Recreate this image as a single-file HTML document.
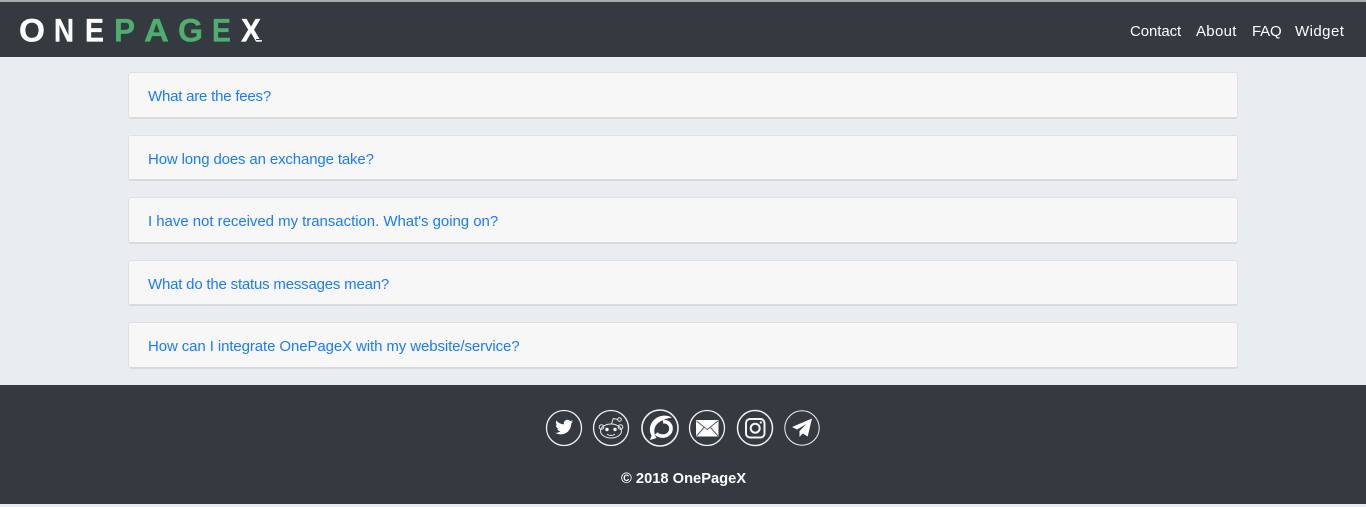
<!DOCTYPE html>
<html><head><meta charset="utf-8"><style>
html,body{margin:0;padding:0;width:1366px;height:507px;overflow:hidden;background:#e9ecf1;font-family:"Liberation Sans",sans-serif}
.h{position:absolute;left:0;top:2px;width:1366px;height:55px;background:#343a40}
.t{position:absolute;left:0;top:0;width:1366px;height:2px;background:#a9aaaa}
.f{position:absolute;left:0;top:385px;width:1366px;height:119px;background:#343a40}
.c{position:absolute;left:128px;width:1108px;background:#f7f7f7;border:1px solid #e0e1e3;border-bottom:2px solid #d9dadc;border-radius:3px}
.q{position:absolute;left:148px;color:#1a7bff;font-size:15px;line-height:20px;white-space:nowrap}
.n{position:absolute;top:22px;color:#fff;font-size:15px;line-height:20px;white-space:nowrap}
.cp{position:absolute;left:621px;top:469px;color:#fff;font-weight:bold;font-size:14.7px;line-height:20px;white-space:nowrap}
svg{position:absolute;left:0;top:0}
</style></head><body>
<div class="t"></div><div class="h"></div>
<div class="c" style="top:72px;height:44px"></div>
<div class="c" style="top:135px;height:43px"></div>
<div class="c" style="top:197px;height:44px"></div>
<div class="c" style="top:260px;height:43px"></div>
<div class="c" style="top:322px;height:44px"></div>
<div class="q" style="top:87px;letter-spacing:-.21px">What are the fees?</div>
<div class="q" style="top:150px;letter-spacing:-.14px">How long does an exchange take?</div>
<div class="q" style="top:212px;letter-spacing:-.04px">I have not received my transaction. What's going on?</div>
<div class="q" style="top:275px;letter-spacing:-.2px">What do the status messages mean?</div>
<div class="q" style="top:337px;letter-spacing:-.1px">How can I integrate OnePageX with my website/service?</div>
<div class="n" style="left:1130px;letter-spacing:-.08px">Contact</div>
<div class="n" style="left:1196px;letter-spacing:.3px">About</div>
<div class="n" style="left:1252px;letter-spacing:-.2px">FAQ</div>
<div class="n" style="left:1295px;letter-spacing:.45px">Widget</div>
<div class="f"></div>
<div class="cp">© 2018 OnePageX</div>
<svg width="1366" height="507" viewBox="0 0 1366 507">
<g font-family="Liberation Sans" font-weight="bold" font-size="32" stroke-width=".3">
<text x="19" y="41.500" fill="#fff" stroke="#fff" textLength="26" lengthAdjust="spacingAndGlyphs">O</text>
<text x="54" y="41.500" fill="#fff" stroke="#fff" textLength="20" lengthAdjust="spacingAndGlyphs">N</text>
<text x="85" y="41.500" fill="#fff" stroke="#fff" textLength="19" lengthAdjust="spacingAndGlyphs">E</text>
<text x="114" y="41.500" fill="#4caf6e" stroke="#4caf6e" textLength="21" lengthAdjust="spacingAndGlyphs">P</text>
<text x="144" y="41.500" fill="#4caf6e" stroke="#4caf6e" textLength="25" lengthAdjust="spacingAndGlyphs">A</text>
<text x="178" y="41.500" fill="#4caf6e" stroke="#4caf6e" textLength="25" lengthAdjust="spacingAndGlyphs">G</text>
<text x="212" y="41.500" fill="#4caf6e" stroke="#4caf6e" textLength="19" lengthAdjust="spacingAndGlyphs">E</text>
<text x="241" y="41.500" fill="#fff" stroke="#fff" textLength="20" lengthAdjust="spacingAndGlyphs">X</text>
</g>
<rect x="256" y="39" width="7" height="1.200" fill="#343a40"/><rect x="256" y="40.200" width="6" height="1.300" fill="#fff"/>
<g fill="none" stroke="#f2f2f2" stroke-width="1.300">
<circle cx="564" cy="428" r="17.500"/><circle cx="611" cy="428" r="17.500"/>
<circle cx="660" cy="428" r="18" stroke-width="1.600"/><circle cx="707" cy="428" r="17.500"/>
<circle cx="755" cy="428" r="17.500" stroke-width="1.500"/><circle cx="802" cy="428" r="17.200" stroke-width="1"/>
</g>
<!-- twitter -->
<path fill="#fff" d="M573 421.500c-.7.3-1.400.5-2.100.6.8-.5 1.300-1.200 1.600-2-.7.4-1.500.7-2.300.9a3.700 3.700 0 0 0-6.300 3.400c-3-.2-5.700-1.600-7.500-3.900-1 1.700-.5 3.800 1.100 4.900-.6 0-1.200-.2-1.700-.5 0 1.800 1.300 3.300 3 3.700-.5.1-1.100.2-1.700.1.500 1.500 1.900 2.500 3.400 2.600-1.500 1.200-3.500 1.800-5.400 1.500 1.600 1 3.600 1.600 5.600 1.600 6.900 0 10.700-5.800 10.500-11 .7-.5 1.300-1.200 1.800-1.900z"/>
<!-- reddit -->
<g fill="none" stroke="#e8e8e8" stroke-width="1">
<ellipse cx="611" cy="431" rx="10.500" ry="7"/>
<circle cx="601.500" cy="427" r="2.300"/><circle cx="620.500" cy="427" r="2.300"/>
<circle cx="619.500" cy="419.500" r="1.800"/><path d="M611.500 424l1.800-5.500 4.500 1"/>
<path d="M607 434.300c2.400 1.400 5.600 1.400 8 0"/>
</g>
<circle cx="607" cy="429.500" r="1.700" fill="#fff"/><circle cx="615" cy="429.500" r="1.700" fill="#fff"/>
<!-- third -->
<path fill="#fff" d="M672 417.500c-5-3-12.500-2.500-17 1.500-5.500 4.500-6.500 11.500-3.500 16.500l-1.500 4.500 6.500-2c-3-4.500-3-10 .5-14 3.500-3.700 9.500-5.500 15-6.500z"/>
<path fill="none" stroke="#fff" stroke-width="3.600" d="M663 421.800c4.500-.6 8 2.400 8 6.700 0 4.500-4 7.800-8.500 7.600-2.500-.1-4.800-1-6.300-2.700"/>
<!-- mail -->
<rect x="696" y="420" width="22.500" height="16.500" fill="#fff" rx=".5"/>
<path fill="none" stroke="#5a5f65" stroke-width="1" d="M696.500 421l10.700 8.500 10.800-8.500M696.500 436l7.500-8.500M718 436l-7.500-8.500"/>
<!-- instagram -->
<g fill="none" stroke="#f4f4f4">
<rect x="746" y="419" width="18.500" height="18.500" rx="4" stroke-width="2"/>
<circle cx="755.200" cy="428.200" r="4.500" stroke-width="2"/>
</g>
<circle cx="760.800" cy="422.500" r="1.100" fill="#fff"/>
<!-- telegram -->
<path fill="#fff" d="M812 418.500l-20 8.500 5 2.500 9.500-5.500-7 7v6l3.200-3.500 5 3z"/>
</svg>
</body></html>
